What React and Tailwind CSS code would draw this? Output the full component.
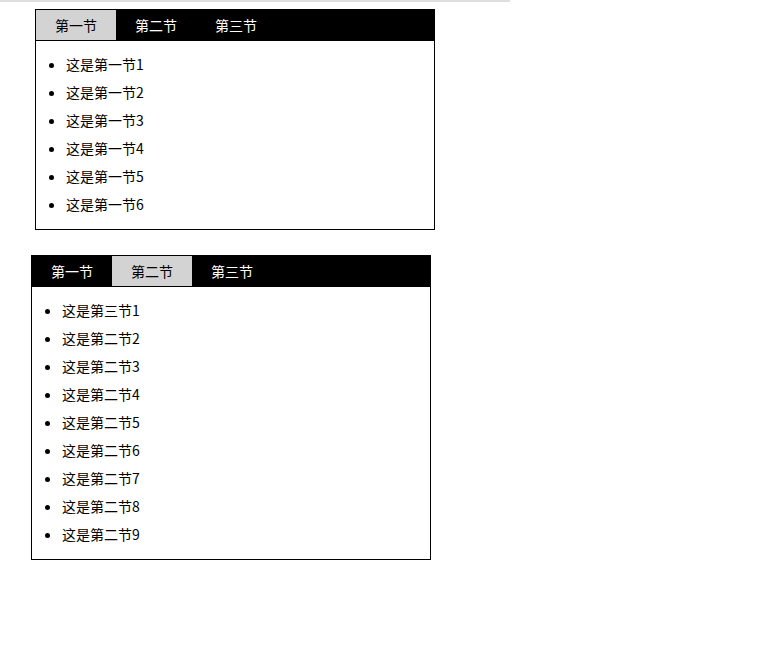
import React, { useState } from 'react';

const TABS = ['第一节', '第二节', '第三节'];

const TabBox = ({ initial, items, className }) => {
  const [active, setActive] = useState(initial);
  return (
    <div className={`w-[400px] border border-black ${className}`}>
      <div className="flex h-[31px] bg-black border-b border-black">
        {TABS.map((t, i) => (
          <button
            key={t}
            onClick={() => setActive(i)}
            className={`w-[80px] h-[30px] text-[14px] leading-[28px] text-center ${i === active ? 'bg-[#d3d3d3] text-black' : 'bg-black text-white'}`}
          >
            {t}
          </button>
        ))}
      </div>
      <ul className="list-disc pl-[30px] py-[10px] text-[14px] text-black">
        {items.map(it => (
          <li key={it} className="h-[28px] leading-[26px]">{it}</li>
        ))}
      </ul>
    </div>
  );
};

export default function App() {
  const first = [1, 2, 3, 4, 5, 6].map(n => `这是第一节${n}`);
  const second = ['这是第三节1', ...[2, 3, 4, 5, 6, 7, 8, 9].map(n => `这是第二节${n}`)];
  return (
    <div className="w-[782px] h-[668px] bg-white" style={{ fontFamily: '"Microsoft YaHei", "Noto Sans CJK SC", sans-serif' }}>
      <div className="w-[510px] h-[2px] bg-[#dedede]" />
      <TabBox initial={0} items={first} className="ml-[35px] mt-[7px]" />
      <TabBox initial={1} items={second} className="ml-[31px] mt-[25px]" />
    </div>
  );
}
